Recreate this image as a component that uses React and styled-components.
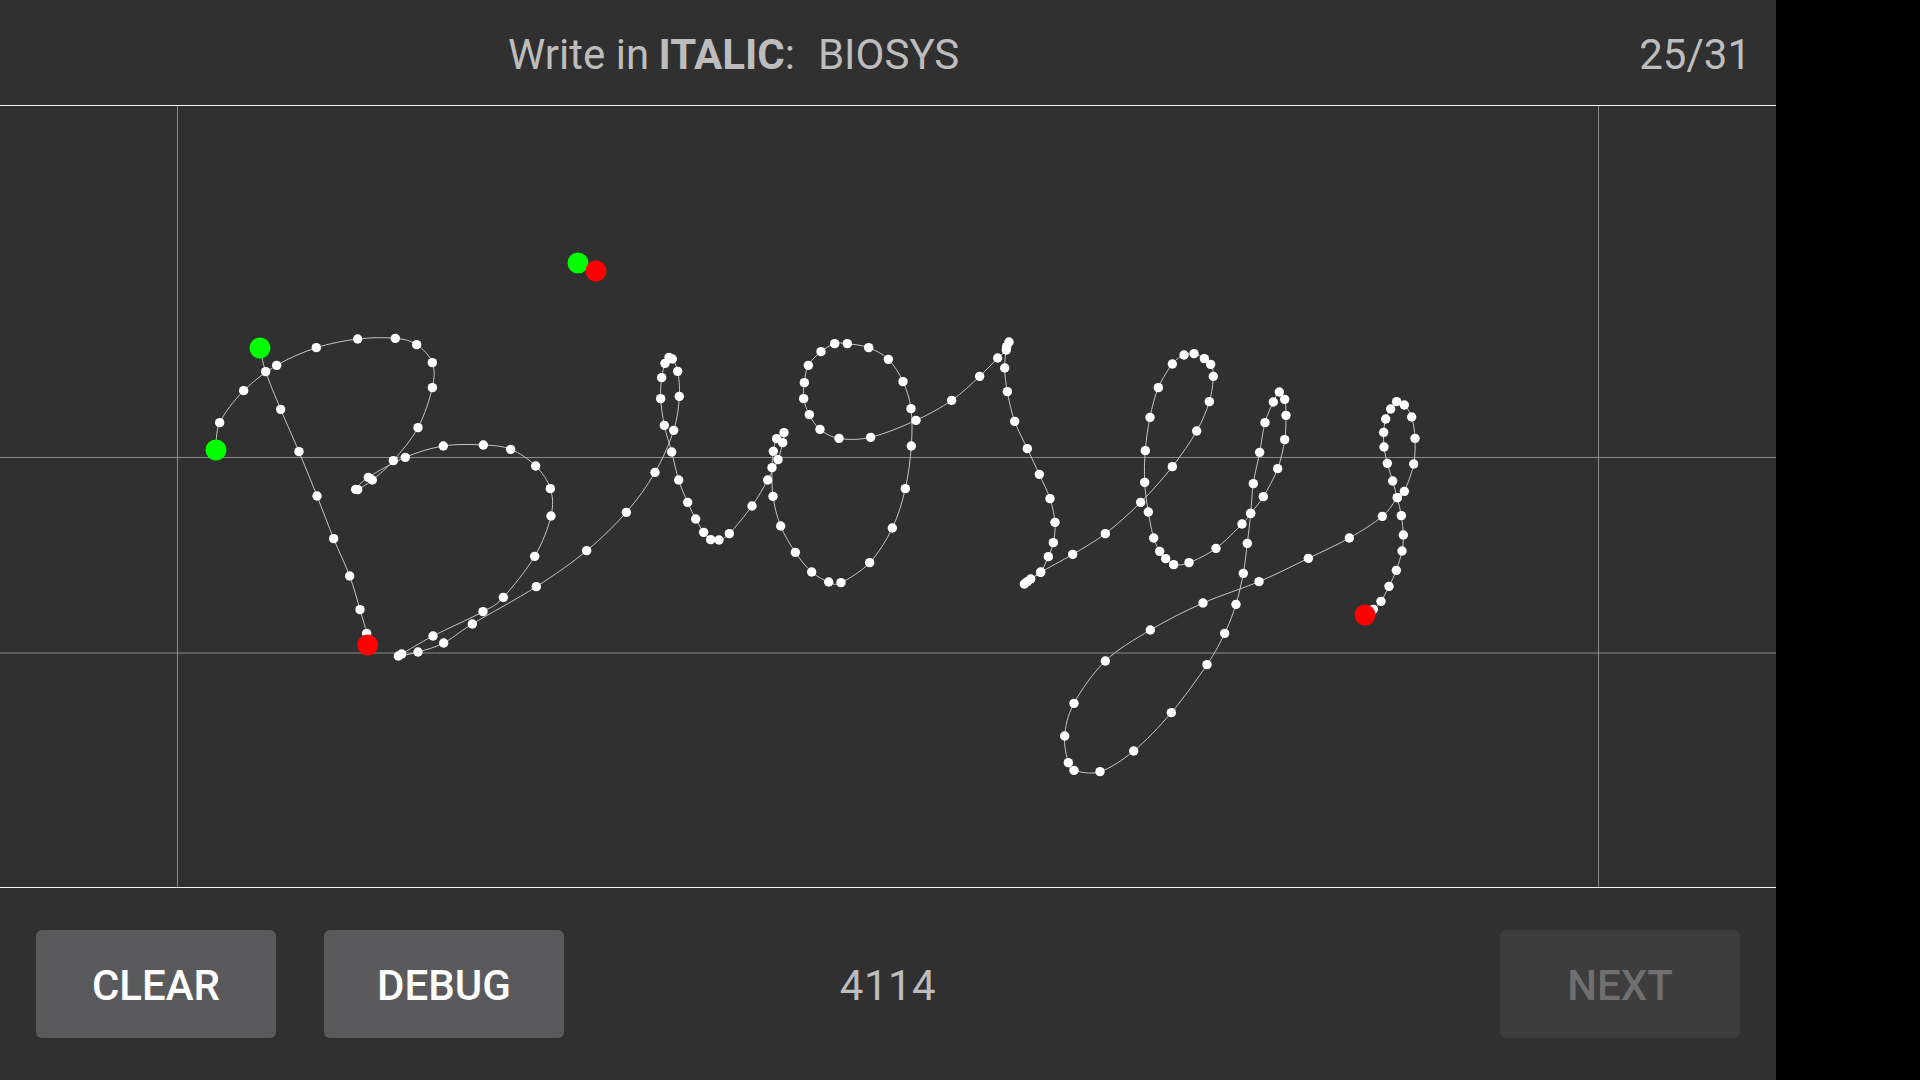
import styled, { createGlobalStyle } from "styled-components";

const GlobalStyle = createGlobalStyle`
  html, body {
    margin: 0;
    padding: 0;
    background: #000;
  }
`;

// Traced from the reference, each list in the pixels of its own crop (3x)
const fromCrop = (ox, oy, pts) => pts.map(([x, y]) => [ox + x / 3, oy + y / 3]);

const mainStroke = [
  ...fromCrop(180, 240, [
    [108, 630], [119, 548], [191, 452], [290, 376], [409, 323], [533, 297], [646, 295], [710, 314],
    [757, 368], [757, 443], [714, 563], [640, 662], [577, 720], [533, 749], [527, 748], [565, 712],
    [676, 652], [790, 618], [910, 615], [992, 628], [1067, 678], [1111, 746], [1113, 828], [1064, 949],
    [970, 1072], [909, 1115], [759, 1188], [665, 1242], [655, 1248], [714, 1236], [791, 1209], [877, 1152],
    [1069, 1040], [1220, 932], [1339, 817], [1425, 697],
  ]),
  ...fromCrop(620, 320, [
    [161, 331], [178, 229], [173, 154], [157, 117], [147, 112], [135, 130], [125, 173], [122, 236],
    [133, 316], [155, 396], [176, 480], [203, 547], [227, 597], [251, 637], [272, 659], [297, 660],
    [328, 641], [396, 558], [443, 480], [474, 419], [488, 368], [492, 338], [470, 356], [460, 394],
    [456, 443], [459, 529], [482, 618], [526, 697], [575, 756], [626, 786], [663, 788], [749, 728],
    [817, 624], [856, 506], [874, 378], [873, 266], [849, 185], [805, 118], [746, 83], [682, 71],
    [644, 71], [603, 95], [565, 136], [553, 188], [551, 236], [568, 284], [600, 328], [657, 355],
    [752, 352], [888, 301], [995, 241], [1079, 169], [1133, 114], [1159, 90], [1167, 66], [1160, 80],
    [1154, 144], [1162, 215], [1184, 304], [1222, 386], [1258, 463], [1290, 536], [1305, 607], [1300, 668],
    [1285, 710], [1262, 756], [1232, 777], [1222, 785], [1213, 792],
  ]),
  ...fromCrop(1000, 330, [
    [122, 727], [218, 673], [316, 611], [422, 517], [517, 410], [590, 303], [628, 215], [640, 139],
    [632, 103], [613, 86], [582, 71], [552, 75], [517, 102], [475, 173], [450, 262], [436, 362],
    [434, 457], [445, 546], [461, 624], [479, 664], [497, 686], [521, 704], [567, 698], [648, 655],
    [726, 582], [752, 550], [790, 500], [833, 416], [854, 329], [858, 256], [854, 208], [838, 186],
    [820, 216], [795, 278], [779, 367], [760, 461], [752, 550], [742, 640], [730, 730], [708, 823],
    [674, 910], [621, 1004], [514, 1148], [401, 1263], [300, 1325], [222, 1321], [205, 1298], [194, 1218],
    [222, 1120], [316, 993], [451, 900], [609, 819], [777, 755], [925, 685], [1048, 624], [1147, 559],
    [1192, 503], [1213, 484], [1241, 402], [1245, 325], [1235, 261], [1213, 225], [1190, 215], [1172, 237],
    [1157, 267], [1151, 307], [1152, 351], [1162, 400], [1178, 453], [1192, 503], [1204, 557], [1210, 615],
    [1206, 663], [1189, 721], [1167, 769], [1143, 814], [1120, 838],
  ]),
];

const stemStroke = fromCrop(180, 240, [
  [257, 395], [302, 508], [357, 635], [411, 768], [461, 896], [509, 1008], [540, 1109], [560, 1180],
]);

const startMarks = [[216, 450], [260, 348], [578, 263]];
const endMarks = [[367.7, 645], [596, 271], [1365, 615]];

// Catmull-Rom through the traced dots, so the line bends like the handwriting
const smoothPath = (pts) => {
  let d = `M${pts[0][0].toFixed(1)} ${pts[0][1].toFixed(1)}`;
  for (let i = 0; i < pts.length - 1; i++) {
    const p0 = pts[Math.max(i - 1, 0)];
    const p1 = pts[i];
    const p2 = pts[i + 1];
    const p3 = pts[Math.min(i + 2, pts.length - 1)];
    const c1x = p1[0] + (p2[0] - p0[0]) / 6;
    const c1y = p1[1] + (p2[1] - p0[1]) / 6;
    const c2x = p2[0] - (p3[0] - p1[0]) / 6;
    const c2y = p2[1] - (p3[1] - p1[1]) / 6;
    d += `C${c1x.toFixed(1)} ${c1y.toFixed(1)} ${c2x.toFixed(1)} ${c2y.toFixed(1)} ${p2[0].toFixed(1)} ${p2[1].toFixed(1)}`;
  }
  return d;
};

const App = () => {
  const mainWithEnds = [[216, 450], ...mainStroke.slice(1), [1365, 615]];
  const stemWithEnds = [[260, 348], ...stemStroke, [367.7, 645]];

  return (
    <>
      <GlobalStyle />
      <Page>
        <Screen>
          <Header>
            <Prompt>
              Write in <b>ITALIC</b>:<Word>BIOSYS</Word>
            </Prompt>
            <Counter>25/31</Counter>
          </Header>
          <Canvas viewBox="0 106 1776 781">
            <GuideLine x1="0" x2="1776" y1="457.5" y2="457.5" />
            <GuideLine x1="0" x2="1776" y1="653" y2="653" />
            <GuideLine x1="177.5" x2="177.5" y1="106" y2="887" />
            <GuideLine x1="1598.5" x2="1598.5" y1="106" y2="887" />
            <InkLine d={smoothPath(mainWithEnds)} />
            <InkLine d={smoothPath(stemWithEnds)} />
            {[...mainStroke.slice(1), ...stemStroke].map(([x, y], i) => (
              <Dot key={i} cx={x} cy={y} r="4.7" />
            ))}
            {startMarks.map(([x, y]) => (
              <Mark key={x} cx={x} cy={y} r="10.5" $color="#00ff00" />
            ))}
            {endMarks.map(([x, y]) => (
              <Mark key={x} cx={x} cy={y} r="10.5" $color="#ff0000" />
            ))}
          </Canvas>
          <Footer>
            <ButtonGroup>
              <Button>CLEAR</Button>
              <Button>DEBUG</Button>
            </ButtonGroup>
            <Score>4114</Score>
            <ButtonGroup $end>
              <Button disabled>NEXT</Button>
            </ButtonGroup>
          </Footer>
        </Screen>
      </Page>
    </>
  );
};

const Page = styled.div`
  width: 1920px;
  height: 1080px;
  background: #000;
  overflow: hidden;
`;

const Screen = styled.div`
  width: 1776px;
  height: 1080px;
  display: flex;
  flex-direction: column;
  background: #303030;
  font-family: Roboto, "Liberation Sans", sans-serif;
`;

const Header = styled.header`
  height: 101px;
  flex: none;
  display: flex;
  align-items: center;
  justify-content: space-between;
  padding: 4px 25px 0 508px;
  border-bottom: 1px solid #f2f2f2;
  font-size: 42px;
  color: #bdbdbd;
`;

const Prompt = styled.div`
  white-space: pre;
  b {
    font-weight: 700;
    margin-left: -1px;
  }
`;

const Word = styled.span`
  margin-left: 23px;
`;

const Counter = styled.div``;

const Canvas = styled.svg`
  display: block;
  width: 1776px;
  height: 781px;
  flex: none;
`;

const GuideLine = styled.line`
  stroke: #8a8a8a;
  stroke-width: 1;
`;

const InkLine = styled.path`
  fill: none;
  stroke: #c4c4c4;
  stroke-width: 1;
`;

const Dot = styled.circle`
  fill: #fff;
`;

const Mark = styled.circle`
  fill: ${(props) => props.$color};
`;

const Footer = styled.footer`
  flex: 1;
  display: grid;
  grid-template-columns: 1fr auto 1fr;
  align-items: start;
  padding: 42px 36px 0;
  border-top: 1px solid #f2f2f2;
`;

const ButtonGroup = styled.div`
  display: flex;
  gap: 48px;
  justify-content: ${(props) => (props.$end ? "flex-end" : "flex-start")};
`;

const Button = styled.button`
  width: 240px;
  height: 108px;
  padding: 2px 0 0;
  border: none;
  border-radius: 6px;
  background: #5a5a5c;
  color: #fff;
  font-family: Roboto, "Liberation Sans", sans-serif;
  font-size: 42px;
  font-weight: 500;

  &:disabled {
    background: #3d3d3d;
    color: #6f6f6f;
  }
`;

const Score = styled.div`
  height: 108px;
  line-height: 111px;
  text-align: center;
  font-size: 42px;
  letter-spacing: 0.5px;
  color: #bdbdbd;
`;

export default App;
